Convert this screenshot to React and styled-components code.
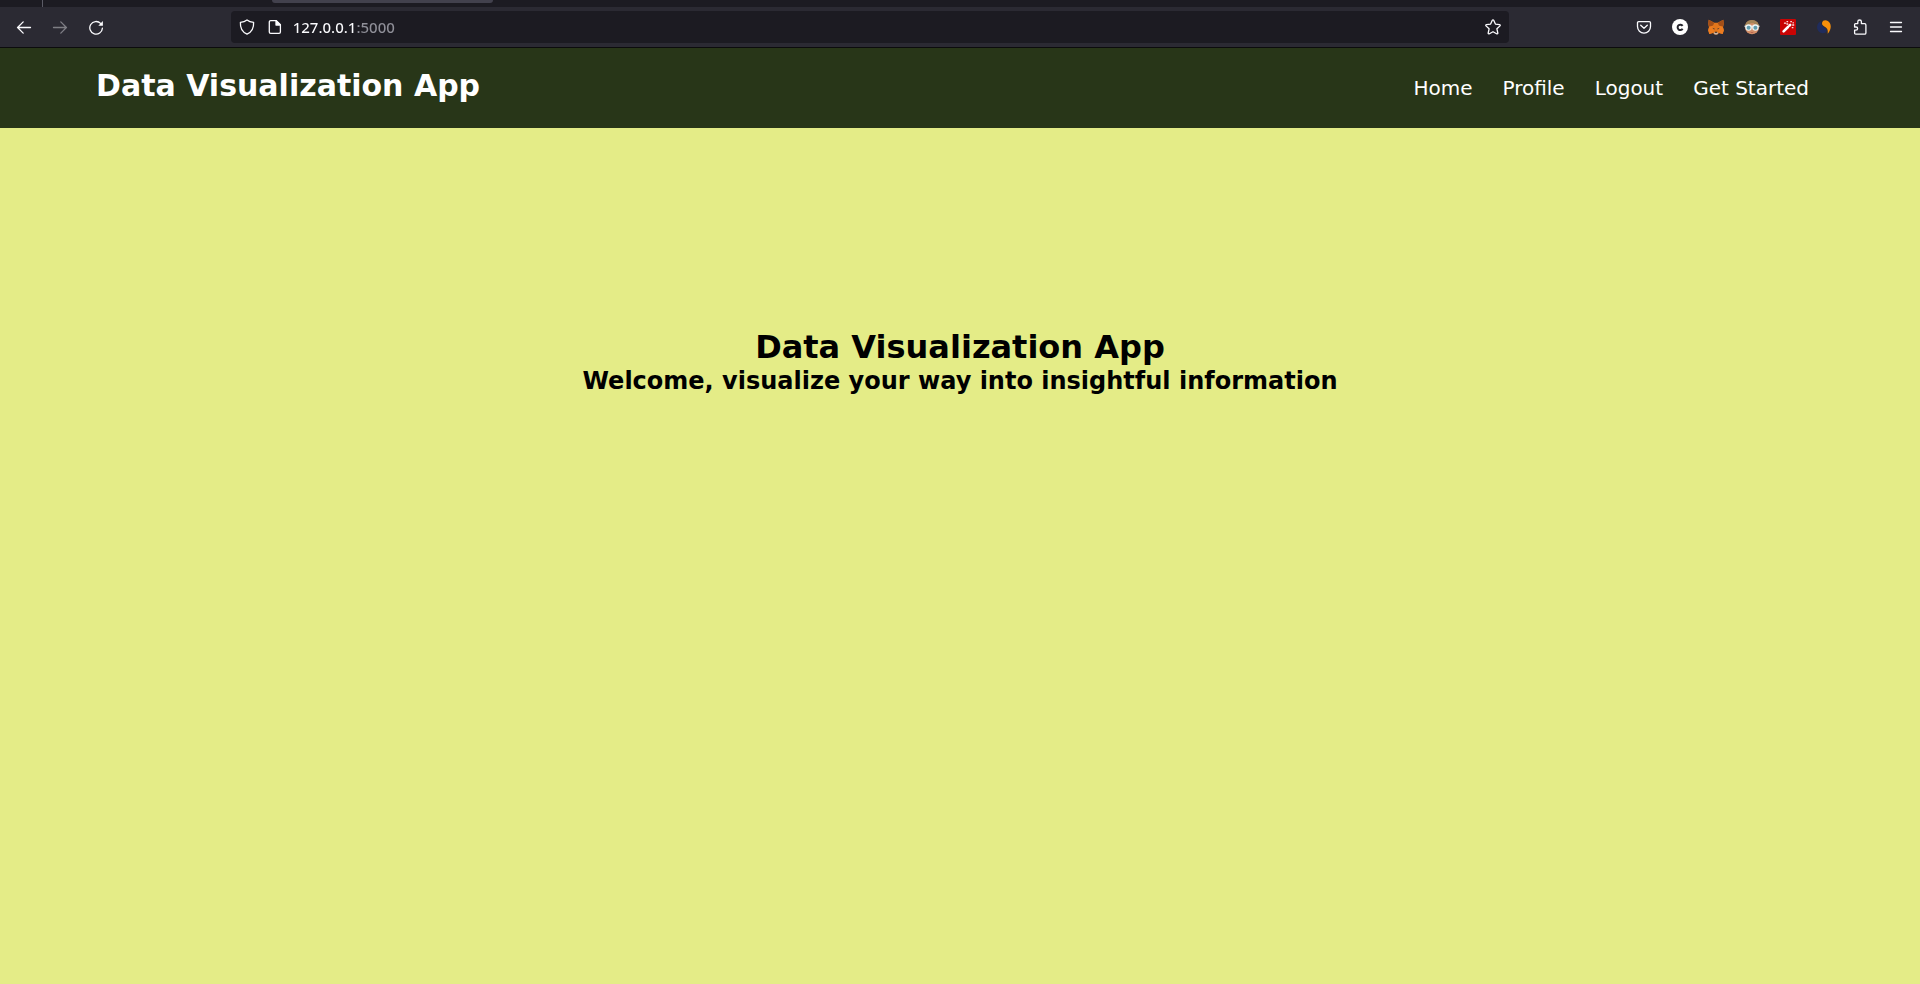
import React from "react";
import styled, { createGlobalStyle } from "styled-components";

const GlobalStyle = createGlobalStyle`
  *, *::before, *::after { box-sizing: border-box; }
  body {
    margin: 0;
    font-family: "DejaVu Sans", sans-serif;
    background: #e4ec87;
  }
`;

const Page = styled.div`
  display: flex;
  flex-direction: column;
  min-height: 100vh;
`;

const TabStrip = styled.div`
  display: flex;
  height: 7px;
  padding-left: 42px;
  background: #1c1b22;
`;

const TabDivider = styled.div`
  width: 1px;
  margin-right: 229px;
  background: #5b5b66;
`;

const ActiveTab = styled.div`
  width: 221px;
  height: 3px;
  border-radius: 0 0 4px 4px;
  background: #42414d;
`;

const Toolbar = styled.div`
  display: flex;
  align-items: center;
  padding: 4px 6px;
  background: #2b2a33;
  border-bottom: 1px solid #0c0c0d;
`;

const Spacer = styled.div`
  flex: 117 1 0;
`;

const ToolButton = styled.button`
  display: flex;
  align-items: center;
  justify-content: center;
  width: ${(p) => (p.$compact ? "28px" : "36px")};
  height: 32px;
  padding: 0;
  border: 0;
  background: none;
  color: #fbfbfe;
  opacity: ${(p) => (p.disabled ? 0.4 : 1)};
`;

const AddressBar = styled.form`
  display: flex;
  align-items: center;
  flex: 1278 1 0;
  height: 32px;
  padding: 0 2px;
  border-radius: 4px;
  background: #1c1b22;
`;

const AddressInput = styled.input`
  flex: 1;
  min-width: 0;
  height: 32px;
  margin-left: 4px;
  padding: 0;
  border: 0;
  outline: 0;
  font: 500 15px "Noto Sans", sans-serif;
  color: #fbfbfe;
  background: linear-gradient(90deg, #fbfbfe 62px, #8f8f98 62px);
  background-clip: text;
  -webkit-background-clip: text;
  -webkit-text-fill-color: transparent;
`;

const Header = styled.header`
  display: flex;
  align-items: center;
  justify-content: space-between;
  min-height: 80px;
  padding: 0 5%;
  background: #283618;
`;

const Brand = styled.h1`
  margin: 0;
  padding-bottom: 4px;
  font-size: 30px;
  line-height: 36px;
  color: #fff;
`;

const NavList = styled.ul`
  display: flex;
  gap: 30px;
  margin: 0;
  padding: 0 15px;
  list-style: none;
`;

const NavLink = styled.a`
  font-size: 20px;
  line-height: 24px;
  color: #fff;
  text-decoration: none;
`;

const Hero = styled.main`
  flex: 1;
  padding-top: 200px;
  text-align: center;
  background: #e4ec87;
`;

const HeroTitle = styled.h2`
  margin: 0;
  font-size: 32px;
  line-height: 38px;
  color: #000;
`;

const HeroText = styled.h3`
  margin: 0;
  font-size: 24px;
  line-height: 30px;
  color: #000;
`;

const Icon = ({ children }) => (
  <svg
    width="16"
    height="16"
    viewBox="0 0 16 16"
    fill="none"
    stroke="currentColor"
    strokeWidth="1.3"
    strokeLinecap="round"
    strokeLinejoin="round"
    aria-hidden="true"
  >
    {children}
  </svg>
);

const BackIcon = () => (
  <Icon>
    <path d="M14.5 8.5h-13M7.2 2.9 1.6 8.5l5.6 5.6" />
  </Icon>
);

const ForwardIcon = () => (
  <Icon>
    <path d="M1.5 8.5h13M8.8 2.9l5.6 5.6-5.6 5.6" />
  </Icon>
);

const ReloadIcon = () => (
  <Icon>
    <path d="M12.6 4.4A6.3 6.3 0 1 0 14.4 9.2" />
    <path d="M14.9 2.1v4.6h-4.6z" fill="currentColor" stroke="none" />
  </Icon>
);

const ShieldIcon = () => (
  <Icon>
    <path d="M8 .9c2 1.500 4 2.100 6.600 2.500.3 5-1.800 9.700-6.600 11.800C3.200 13.100 1.100 8.400 1.400 3.400 4 3 6 2.400 8 .9z" />
  </Icon>
);

const FileIcon = () => (
  <Icon>
    <path d="M3.700 1.600h5.600l4.100 4.100v7.300a1.400 1.400 0 0 1-1.400 1.400H3.700A1.400 1.400 0 0 1 2.300 13V3a1.400 1.400 0 0 1 1.400-1.400z" />
    <path d="M9 1.600v4.400h4.400z" fill="currentColor" />
  </Icon>
);

const StarIcon = () => (
  <Icon>
    <path d="M7.300 1.300a.8.8 0 0 1 1.400 0l1.700 3.800 4.200.5a.8.8 0 0 1 .4 1.300l-3.100 2.900.9 4.200a.8.8 0 0 1-1.200.8L8 12.700l-3.600 2.100a.8.8 0 0 1-1.200-.8l.9-4.200L1 6.900a.8.8 0 0 1 .4-1.300l4.200-.5z" />
  </Icon>
);

const PocketIcon = () => (
  <Icon>
    <path d="M2.700 2.600h10.600a1.200 1.200 0 0 1 1.200 1.200v3.800a6.500 6.500 0 0 1-13 0V3.800a1.200 1.200 0 0 1 1.200-1.200z" />
    <path d="m4.700 6.200 3.300 3.100 3.300-3.100" />
  </Icon>
);

const CircleCIcon = () => (
  <Icon>
    <circle cx="8" cy="8" r="8" fill="#fff" stroke="none" />
    <path d="M10.600 6.900a2.700 2.700 0 1 0 0 2.900" stroke="#26252d" strokeWidth="2" strokeLinecap="butt" />
  </Icon>
);

const FoxIcon = () => (
  <Icon>
    <g stroke="none">
      <path d="M.7.8 6.300 3.800h3.400L15.300.8l.5 4-.8 3.500.8 3-1.100 3.600-3.600-.8L9.300 15.500H6.700l-1.800-1.400-3.600.8-1.100-3.600.8-3L.2 4.800z" fill="#e2761b" />
      <path d="M.7.8 6.300 3.800 4.900 6.700.8 7.500.2 4.800zM15.300.8 9.700 3.800l1.400 2.900 4.100.8.6-2.700z" fill="#a34f18" />
      <path d="m1 8.300 3.900-1.600 1.400 4.100-1.400 3.300-3.600.8-1.100-3.600zM15 8.300l-3.900-1.600-1.400 4.100 1.400 3.300 3.600.8 1.100-3.600z" fill="#ec7c20" />
      <path d="m4.300 8.700 2.300.8-.4 1.300zM11.700 8.700l-2.300.8.4 1.300z" fill="#4b3a30" />
      <path d="m6 13 .9.600h2.200L10 13l.2 1.300-1 1.200H6.800l-1-1.200z" fill="#c9b6aa" />
      <path d="M7 12.700h2l.3 1h-2.600z" fill="#2a211c" />
    </g>
  </Icon>
);

const FaceIcon = () => (
  <Icon>
    <g stroke="none">
      <circle cx="8" cy="8.200" r="7" fill="#d48f68" />
      <path d="M1 8C.8 3.500 4 .7 8.200.9c4 .1 7 3 6.800 7.100l-2-1.300-3.700-2.200L4.800 6z" fill="#a48458" />
      <path d="M6.500 4.300h3.200l1.500 3H5z" fill="#d48f68" />
      <path d="M.5 6.600h15v1.500H.5z" fill="#d8dddd" />
      <circle cx="4.600" cy="8.500" r="3.200" fill="#edf4f4" />
      <circle cx="11.400" cy="8.500" r="3.200" fill="#edf4f4" />
      <circle cx="4.600" cy="8.700" r="2" fill="#5f9bae" />
      <circle cx="11.400" cy="8.700" r="2" fill="#5f9bae" />
      <path d="M6 12.700q2 .8 4 0-2 2-4 0z" fill="#a94f43" />
    </g>
  </Icon>
);

const WandIcon = () => (
  <Icon>
    <rect width="16" height="16" rx="1" fill="#c90404" stroke="none" />
    <path d="m3.600 12.400 4.400-4.400" stroke="#fff" strokeWidth="2.600" />
    <path d="m9.500 6.500.7-.7" stroke="#fff" strokeWidth="2.600" />
    <path d="M4.500 4.200h1M7 2.700h.6M6.900 5h.8M10.800 2.700h.6M13 3.800h.4M12.700 6h1M12.300 8.700h.6" stroke="#ffe4e4" strokeWidth="1.300" />
  </Icon>
);

const SwirlIcon = () => (
  <Icon>
    <g stroke="none">
      <path d="M5.200 2.300C1.700 3.400.4 7.200 1.400 10.200c1.300 3.700 5.500 5 8.300 3.200 1.500-1 1.500-3.300-.3-4.300C6.800 7.700 4.500 5.700 5.200 2.300z" fill="#202c5c" />
      <path d="M6.100 3.700C6.500 1.300 9.500.6 11.800 2c3.700 2.300 4.200 8-.1 12.700.3-2.800.1-4.700-1.800-6.200C7.700 7 5.700 6.300 6.100 3.700z" fill="#f78f0b" />
    </g>
  </Icon>
);

const PuzzleIcon = () => (
  <Icon>
    <path d="M2.600 5.600q0-1 1-1h2.200V2.800a1.800 1.800 0 0 1 3.600 0v1.800h3.200q1.300 0 1.300 1.300v8q0 1.300-1.300 1.300H3.800q-1.200 0-1.200-1.200v-2.800h1.400a1.600 1.600 0 0 0 0-3.200H2.600z" />
  </Icon>
);

const MenuIcon = () => (
  <Icon>
    <path d="M2.500 3.500h11M2.500 8h11M2.500 12.500h11" />
  </Icon>
);

const extensions = [
  ["Save to Pocket", PocketIcon],
  ["Account", CircleCIcon],
  ["MetaMask", FoxIcon],
  ["Profile viewer", FaceIcon],
  ["Magic wand", WandIcon],
  ["Swirl", SwirlIcon],
  ["Extensions", PuzzleIcon],
  ["Open application menu", MenuIcon],
];

const links = ["Home", "Profile", "Logout", "Get Started"];

export default function App() {
  return (
    <Page>
      <GlobalStyle />
      <TabStrip>
        <TabDivider />
        <ActiveTab />
      </TabStrip>
      <Toolbar>
        <ToolButton aria-label="Back"><BackIcon /></ToolButton>
        <ToolButton aria-label="Forward" disabled><ForwardIcon /></ToolButton>
        <ToolButton aria-label="Reload"><ReloadIcon /></ToolButton>
        <Spacer />
        <AddressBar onSubmit={(e) => e.preventDefault()}>
          <ToolButton type="button" $compact aria-label="Tracking protection"><ShieldIcon /></ToolButton>
          <ToolButton type="button" $compact aria-label="Site information"><FileIcon /></ToolButton>
          <AddressInput aria-label="Address" defaultValue="127.0.0.1:5000" spellCheck={false} />
          <ToolButton type="button" $compact aria-label="Bookmark this page"><StarIcon /></ToolButton>
        </AddressBar>
        <Spacer />
        {extensions.map(([label, Glyph]) => (
          <ToolButton key={label} aria-label={label}><Glyph /></ToolButton>
        ))}
      </Toolbar>
      <Header>
        <Brand>Data Visualization App</Brand>
        <nav>
          <NavList>
            {links.map((label) => (
              <li key={label}><NavLink href="#">{label}</NavLink></li>
            ))}
          </NavList>
        </nav>
      </Header>
      <Hero>
        <HeroTitle>Data Visualization App</HeroTitle>
        <HeroText>Welcome, visualize your way into insightful information</HeroText>
      </Hero>
    </Page>
  );
}
